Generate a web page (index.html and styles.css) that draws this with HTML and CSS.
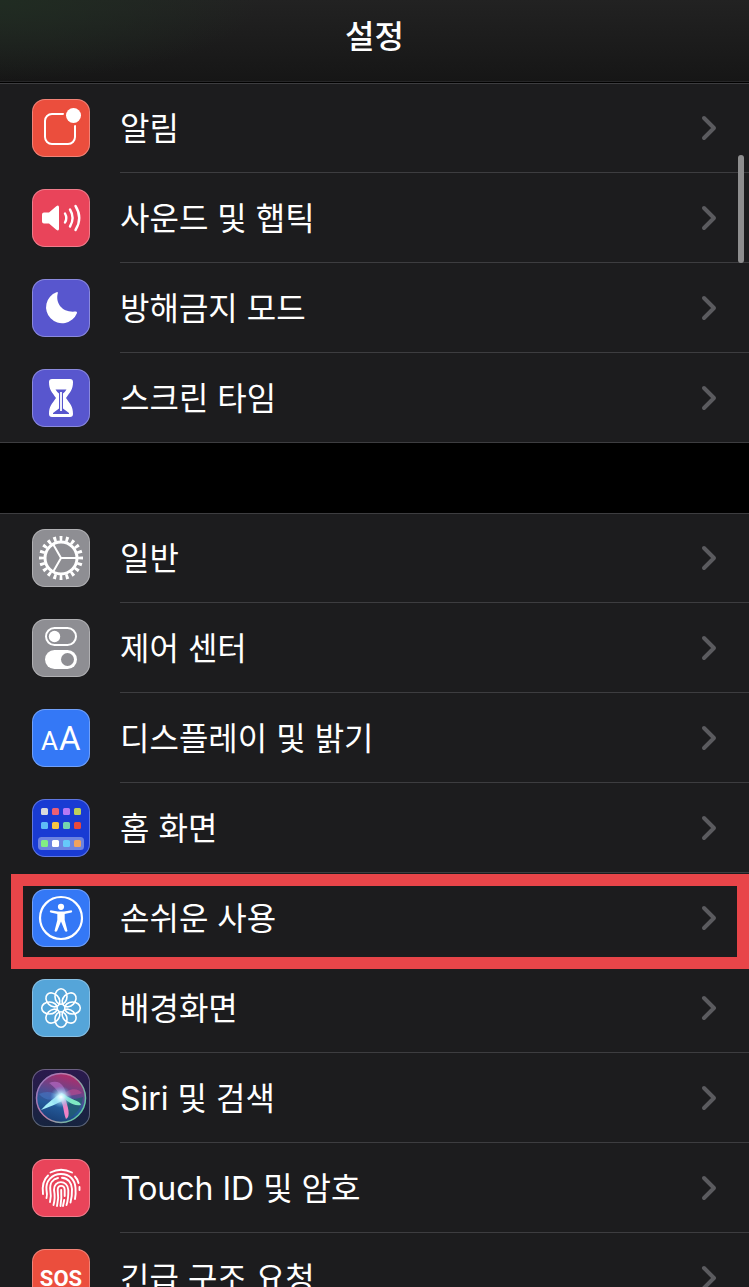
FILE: index.html
```
<!DOCTYPE html>
<html lang="ko">
<head>
<meta charset="UTF-8">
<meta name="viewport" content="width=device-width, initial-scale=1.0">
<title>설정</title>
<link rel="stylesheet" href="styles.css">
</head>
<body>
<!-- shared chevron -->
<svg class="defs" width="0" height="0" aria-hidden="true">
  <symbol id="chevron" viewBox="0 0 16 26">
    <path d="M3 3 L13 13 L3 23" fill="none" stroke="#5b5b5f" stroke-width="4" stroke-linecap="round" stroke-linejoin="round"/>
  </symbol>
</svg>

<div class="phone">
  <header class="navbar">
    <h1>설정</h1>
  </header>

  <main class="content">
    <ul class="group">
      <li class="row">
        <svg class="icon red" viewBox="0 0 58 58">
          <rect x="13" y="15" width="30" height="30" rx="7" fill="none" stroke="#fff" stroke-width="2"/>
          <circle cx="41.5" cy="16.5" r="10" fill="#eb4e3d"/>
          <circle cx="41.5" cy="16.5" r="7.5" fill="#fff"/>
        </svg>
        <a href="#notifications">알림<svg class="chevron"><use href="#chevron"/></svg></a>
      </li>
      <li class="row">
        <svg class="icon pink" viewBox="0 0 58 58">
          <path d="M12 23.500h5l7-6q3-2.200 3 1v21q0 3.200-3 1l-7-6h-5q-2 0-2-2v-7q0-2 2-2z" fill="#fff"/>
          <path d="M33 24.500q2.600 4.500 0 9M38 20.500q5.200 8.500 0 17M43.500 17q7.500 12 0 24" fill="none" stroke="#fff" stroke-width="2.400" stroke-linecap="round"/>
        </svg>
        <a href="#sounds">사운드 및 햅틱<svg class="chevron"><use href="#chevron"/></svg></a>
      </li>
      <li class="row">
        <svg class="icon purple" viewBox="0 0 58 58">
          <path d="M24.500 13.200q1.600-.6 1.300 1c-2.800 10.500 5.200 19.800 17.800 18.300q2-.2 1.300 1.700A16 16 0 1 1 24.500 13.200z" fill="#fff"/>
        </svg>
        <a href="#dnd">방해금지 모드<svg class="chevron"><use href="#chevron"/></svg></a>
      </li>
      <li class="row">
        <svg class="icon purple" viewBox="0 0 58 58">
          <path d="M20 10h18q3 0 3 3c0 8-3 10-7 16 4 6 7 8 7 16q0 3-3 3h-18q-3 0-3-3c0-8 3-10 7-16-4-6-7-8-7-16q0-3 3-3z" fill="#fff"/>
          <path d="M23.500 20.500h11q-1.500 2.500-3.500 4v15l6 4.500v1h-16v-1l6-4.500v-15q-2-1.500-3.500-4z" fill="#5856ce"/>
          <path d="M29 23v19" stroke="#fff" stroke-width="1.800"/>
        </svg>
        <a href="#screentime">스크린 타임<svg class="chevron"><use href="#chevron"/></svg></a>
      </li>
    </ul>

    <ul class="group">
      <li class="row">
        <svg class="icon gray" viewBox="0 0 58 58">
          <g fill="none" stroke="#fff">
            <circle cx="29" cy="29" r="16" stroke-width="3"/>
            <circle cx="29" cy="29" r="19.500" stroke-width="5" pathLength="200" stroke-dasharray="4.600 5.400" stroke-dashoffset="2.300"/>
            <path d="M29 29h16M29 29l-8-14M29 29l-8 14" stroke-width="2"/>
          </g>
        </svg>
        <a href="#general">일반<svg class="chevron"><use href="#chevron"/></svg></a>
      </li>
      <li class="row">
        <svg class="icon gray" viewBox="0 0 58 58">
          <rect x="14" y="9" width="30" height="17" rx="8.500" fill="none" stroke="#fff" stroke-width="2"/>
          <circle cx="22.500" cy="17.500" r="5.700" fill="#fff"/>
          <rect x="13" y="31" width="32" height="19" rx="9.500" fill="#fff"/>
          <circle cx="35.500" cy="40.500" r="6.500" fill="#8e8e93"/>
        </svg>
        <a href="#control">제어 센터<svg class="chevron"><use href="#chevron"/></svg></a>
      </li>
      <li class="row">
        <svg class="icon blue" viewBox="0 0 58 58">
          <text class="aa" x="9" y="41" font-size="26">A</text>
          <text class="aa" x="27" y="41" font-size="33">A</text>
        </svg>
        <a href="#display">디스플레이 및 밝기<svg class="chevron"><use href="#chevron"/></svg></a>
      </li>
      <li class="row">
        <svg class="icon navy" viewBox="0 0 58 58">
          <rect x="6" y="38" width="46" height="13" rx="3.500" fill="#6c83e0"/>
          <rect x="9" y="9" width="7" height="7" rx="1.500" fill="#d9d9dc"/>
          <rect x="20" y="9" width="7" height="7" rx="1.500" fill="#eb5f74"/>
          <rect x="31" y="9" width="7" height="7" rx="1.500" fill="#b578f5"/>
          <rect x="42" y="9" width="7" height="7" rx="1.500" fill="#bccf5c"/>
          <rect x="9" y="23" width="7" height="7" rx="1.500" fill="#5fbdf6"/>
          <rect x="20" y="23" width="7" height="7" rx="1.500" fill="#f6c544"/>
          <rect x="31" y="23" width="7" height="7" rx="1.500" fill="#74d4ae"/>
          <rect x="42" y="23" width="7" height="7" rx="1.500" fill="#e9493d"/>
          <rect x="9" y="41" width="7" height="7" rx="1.500" fill="#82ef83"/>
          <rect x="20" y="41" width="7" height="7" rx="1.500" fill="#fff"/>
          <rect x="31" y="41" width="7" height="7" rx="1.500" fill="#66c9fa"/>
          <rect x="42" y="41" width="7" height="7" rx="1.500" fill="#f0a35c"/>
        </svg>
        <a href="#home">홈 화면<svg class="chevron"><use href="#chevron"/></svg></a>
      </li>
      <li class="row marked">
        <svg class="icon blue" viewBox="0 0 58 58">
          <circle cx="29" cy="29" r="21" fill="none" stroke="#fff" stroke-width="2.200"/>
          <circle cx="29" cy="17.800" r="3.100" fill="#fff"/>
          <path d="M18.500 21.200l7.500 1.300h6l7.500-1.300q1.500 1.400 0 2.300l-6.800 1.500v6l2.800 11q-1.300 1.500-2.600 0l-3.900-9.500-3.900 9.500q-1.300 1.500-2.600 0l2.800-11v-6l-6.800-1.500q-1.500-1 0-2.300z" fill="#fff"/>
        </svg>
        <a href="#accessibility">손쉬운 사용<svg class="chevron"><use href="#chevron"/></svg></a>
      </li>
      <li class="row">
        <svg class="icon sky" viewBox="0 0 58 58">
          <defs><ellipse id="petal" cx="29" cy="17.500" rx="6" ry="7.800"/></defs>
          <g fill="none" stroke="#fff" stroke-width="1.600">
            <use href="#petal"/>
            <use href="#petal" transform="rotate(45 29 29)"/>
            <use href="#petal" transform="rotate(90 29 29)"/>
            <use href="#petal" transform="rotate(135 29 29)"/>
            <use href="#petal" transform="rotate(180 29 29)"/>
            <use href="#petal" transform="rotate(225 29 29)"/>
            <use href="#petal" transform="rotate(270 29 29)"/>
            <use href="#petal" transform="rotate(315 29 29)"/>
          </g>
        </svg>
        <a href="#wallpaper">배경화면<svg class="chevron"><use href="#chevron"/></svg></a>
      </li>
      <li class="row">
        <svg class="icon siri" viewBox="0 0 58 58">
          <defs>
            <linearGradient id="orb" x1="0.600" y1="0" x2="0.300" y2="1">
              <stop offset="0" stop-color="#b32c69"/>
              <stop offset="0.400" stop-color="#574a91"/>
              <stop offset="0.650" stop-color="#245b9b"/>
              <stop offset="1" stop-color="#183d74"/>
            </linearGradient>
            <linearGradient id="ring" x1="0" y1="0" x2="1" y2="0.600">
              <stop offset="0" stop-color="#8b7ac4"/>
              <stop offset="0.500" stop-color="#c07aa6"/>
              <stop offset="1" stop-color="#62c7a5"/>
            </linearGradient>
            <radialGradient id="glow">
              <stop offset="0" stop-color="#fff"/>
              <stop offset="0.300" stop-color="#c7f4ff" stop-opacity="0.900"/>
              <stop offset="1" stop-color="#58b6e8" stop-opacity="0"/>
            </radialGradient>
          </defs>
          <circle cx="29" cy="29" r="24.500" fill="url(#orb)" stroke="url(#ring)" stroke-width="1.500"/>
          <path d="M29 28C35 31 41 31 51 28 50 39 43 48 33 50 34 41 33 35 29 28z" fill="#205e70" opacity="0.800"/>
          <path d="M29 28C25 20 20 16 17 14 28 10 33 17 35 28z" fill="#bd70cd" opacity="0.600"/>
          <path d="M29 28C36 19 45 18 50 24 43 27 36 26 29 28z" fill="#c14c91" opacity="0.600"/>
          <path d="M29 28C20 22 14 22 7 25 12 31 20 33 29 28z" fill="#467ece" opacity="0.500"/>
          <path d="M30 24C23 28 15 34 9 41 18 38 26 34 34 30z" fill="#a5eef8"/>
          <path d="M28 26C34 31 41 38 49 36 48 31 38 31 32 25z" fill="#7fe9c4"/>
          <path d="M27 29C32 34 31 43 34 50 39 48 36 37 33 29z" fill="#ee83c6"/>
          <circle cx="29" cy="28" r="11" fill="url(#glow)"/>
        </svg>
        <a href="#siri">Siri 및 검색<svg class="chevron"><use href="#chevron"/></svg></a>
      </li>
      <li class="row">
        <svg class="icon pink" viewBox="0 0 58 58">
          <g fill="none" stroke="#fff" stroke-width="1.900" stroke-linecap="round">
            <path d="M18.500 13.500Q29 8 40 13.500"/>
            <path d="M11 35C10 27 11.500 20.500 16 16.500"/>
            <path d="M43 17.500Q45.500 20 46.500 24M47.500 28V31"/>
            <path d="M14.500 39Q15.500 36 14.500 31C13.500 22 20 15 29 15S43 21 43.500 29Q44 35 43 40"/>
            <path d="M18 43Q19.500 37 18.300 31C17.500 24 21 20 26 19M30 18.700C36 19 39.700 24 40 30Q40.200 37 38.500 43.500"/>
            <path d="M21.500 46Q23.500 39 22 31C21.500 20.500 36 20.500 36.300 31Q36.500 40 34.500 46"/>
            <path d="M25 47Q27 39 25.700 31C25.700 25.500 32.500 25.500 32.700 31V37M32.200 41L31 47"/>
            <path d="M29.200 31Q29.800 39 28.500 47"/>
          </g>
        </svg>
        <a href="#touchid">Touch ID 및 암호<svg class="chevron"><use href="#chevron"/></svg></a>
      </li>
      <li class="row">
        <svg class="icon red" viewBox="0 0 58 58">
          <text class="sos" x="29" y="37">SOS</text>
        </svg>
        <a href="#sos">긴급 구조 요청<svg class="chevron"><use href="#chevron"/></svg></a>
      </li>
    </ul>
  </main>

  <div class="scroll-thumb"></div>
</div>
</body>
</html>
```
FILE: styles.css
```
*, *::after { box-sizing: border-box; }
body {
  margin: 0;
  background: #000;
  color: #fff;
  font-family: Inter, "Noto Sans CJK KR", sans-serif;
}
.defs { position: absolute; }
.phone { position: relative; height: 100vh; overflow: hidden; }

.navbar {
  height: 82px;
  display: flex;
  justify-content: center;
  padding-top: 13px;
  background: radial-gradient(ellipse 260px 80px at 0 0, #202c22, transparent), linear-gradient(#222, #161616);
  border-bottom: 1px solid #262628;
}
.navbar h1 { margin: 0; font-size: 32px; line-height: 48px; font-weight: 500; }

.content { padding-top: 1px; }
.group {
  list-style: none;
  margin: 0 0 70px;
  padding: 0;
  background: #1c1c1e;
  box-shadow: inset 0 1px #3d3d40;
}
.row {
  position: relative;
  height: 90px;
  display: flex;
  align-items: center;
  gap: 30px;
  padding-left: 32px;
}
.row a {
  flex: 1;
  height: 90px;
  display: flex;
  align-items: center;
  justify-content: space-between;
  padding: 2px 32px 0 0;
  border-bottom: 1px solid #3d3d40;
  color: #fff;
  font-size: 32px;
  font-weight: 390;
  line-height: 48px;
  text-decoration: none;
}
.row:last-child { box-shadow: inset 0 -1px #3d3d40; }
.chevron { width: 16px; height: 26px; margin-bottom: 2px; }

.icon {
  width: 58px;
  height: 58px;
  flex: none;
  border-radius: 13px;
  box-shadow: inset 0 0 0 1px rgba(255, 255, 255, 0.3);
}
.red { background: #eb4e3d; }
.pink { background: #e9445a; }
.purple { background: #5856ce; }
.gray { background: #8e8e93; }
.blue { background: #3478f6; }
.navy { background: #193bd3; }
.sky { background: #55a5d9; }
.siri { background: linear-gradient(#2b1a4d, #16243f); }
.aa { fill: #fff; font-family: Roboto, sans-serif; }
.sos { fill: #fff; font-family: Roboto, sans-serif; font-size: 22px; font-weight: 700; text-anchor: middle; }

/* red frame round the accessibility row */
.marked::after {
  content: "";
  position: absolute;
  top: 1px;
  left: 11px;
  right: 0;
  height: 95px;
  border: 12px solid #e84549;
  z-index: 1;
}

.scroll-thumb {
  position: absolute;
  top: 155px;
  right: 5px;
  width: 6px;
  height: 108px;
  border-radius: 3px;
  background: #8e8e8f;
}
```
